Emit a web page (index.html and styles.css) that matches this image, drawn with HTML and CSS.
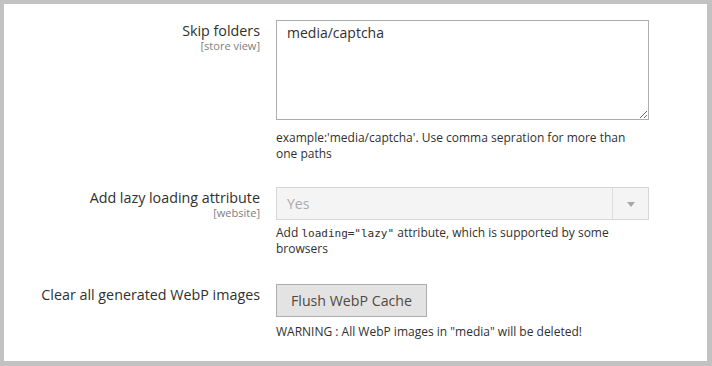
FILE: index.html
```html
<!DOCTYPE html>
<html lang="en">
<head>
    <meta charset="UTF-8">
    <meta name="viewport" content="width=device-width, initial-scale=1.0">
    <title>WebP Settings</title>
    <link rel="stylesheet" href="styles.css">
</head>
<body>
<div class="panel">
    <div class="row row-skip">
        <div class="label">
            <span class="label-text">Skip folders</span>
            <span class="scope">[store view]</span>
        </div>
        <div class="field">
            <textarea class="textarea">media/captcha</textarea>
            <p class="note note-textarea">example:'media/captcha'. Use comma sepration for more than one paths</p>
        </div>
    </div>

    <div class="row row-lazy">
        <div class="label">
            <span class="label-text">Add lazy loading attribute</span>
            <span class="scope">[website]</span>
        </div>
        <div class="field">
            <div class="select is-disabled">
                <span class="select-value">Yes</span>
                <span class="select-arrow"></span>
            </div>
            <p class="note">Add <code>loading="lazy"</code> attribute, which is supported by some browsers</p>
        </div>
    </div>

    <div class="row row-flush">
        <div class="label">
            <span class="label-text">Clear all generated WebP images</span>
        </div>
        <div class="field">
            <button class="button" type="button">Flush WebP Cache</button>
            <p class="note note-warning">WARNING : All WebP images in "media" will be deleted!</p>
        </div>
    </div>
</div>
</body>
</html>
```

FILE: styles.css
```css
/* Page frame */
body {
    margin: 0;
    background-color: #c2c2c2;
    font-family: 'Open Sans', 'Noto Sans', sans-serif;
    color: #303030;
}

.panel {
    box-sizing: border-box;
    width: 712px;
    height: 366px;
    border-style: solid;
    border-color: #c2c2c2;
    border-width: 4px 5px 5px 4px;
    background-color: #ffffff;
    padding-top: 16px;
}

/* Rows: label column + field column */
.row {
    display: grid;
    grid-template-columns: 256px 373px;
    column-gap: 16px;
}

.row-skip {
    margin-bottom: 25px;
}

.row-lazy {
    margin-bottom: 27px;
}

.label {
    display: flex;
    flex-direction: column;
    align-items: flex-end;
    padding-top: 3px;
    text-align: right;
}

.label-text {
    font-size: 14.3px;
    line-height: 15px;
    color: #303030;
}

.scope {
    font-size: 11px;
    line-height: 15px;
    color: #808080;
}

/* Field controls */
.textarea {
    display: block;
    box-sizing: border-box;
    width: 373px;
    height: 100px;
    margin: 0;
    padding: 2px 10px;
    border: 1px solid #adadad;
    border-radius: 0;
    font-family: inherit;
    font-size: 14px;
    line-height: 20px;
    color: #303030;
    resize: both;
    outline: none;
}

.select {
    box-sizing: border-box;
    display: flex;
    align-items: center;
    width: 373px;
    height: 33px;
    border: 1px solid #d6d6d6;
    background-color: #f4f4f4;
}

.select-value {
    flex: 1;
    padding-left: 10px;
    font-size: 14px;
    color: #aaaaaa;
}

.select-arrow {
    position: relative;
    width: 35px;
    height: 100%;
    border-left: 1px solid #dedede;
}

.select-arrow::after {
    content: '';
    position: absolute;
    left: 14px;
    top: 14px;
    border-style: solid;
    border-width: 5px 4px 0 4px;
    border-color: #a8a8a8 transparent transparent transparent;
}

.button {
    box-sizing: border-box;
    height: 33px;
    padding: 0 14px;
    border: 1px solid #adadad;
    border-radius: 0;
    background-color: #e3e3e3;
    color: #514943;
    font-family: inherit;
    font-size: 14.2px;
    font-weight: 400;
    cursor: pointer;
}

.note {
    margin: 5px 0 0;
    font-size: 12px;
    line-height: 16px;
    color: #303030;
}

.note-textarea {
    margin-top: 10px;
}

.note-warning {
    margin-top: 7px;
}

.note code {
    font-family: 'DejaVu Sans Mono', 'Liberation Mono', monospace;
    font-size: 11px;
    line-height: 14px;
}
```
